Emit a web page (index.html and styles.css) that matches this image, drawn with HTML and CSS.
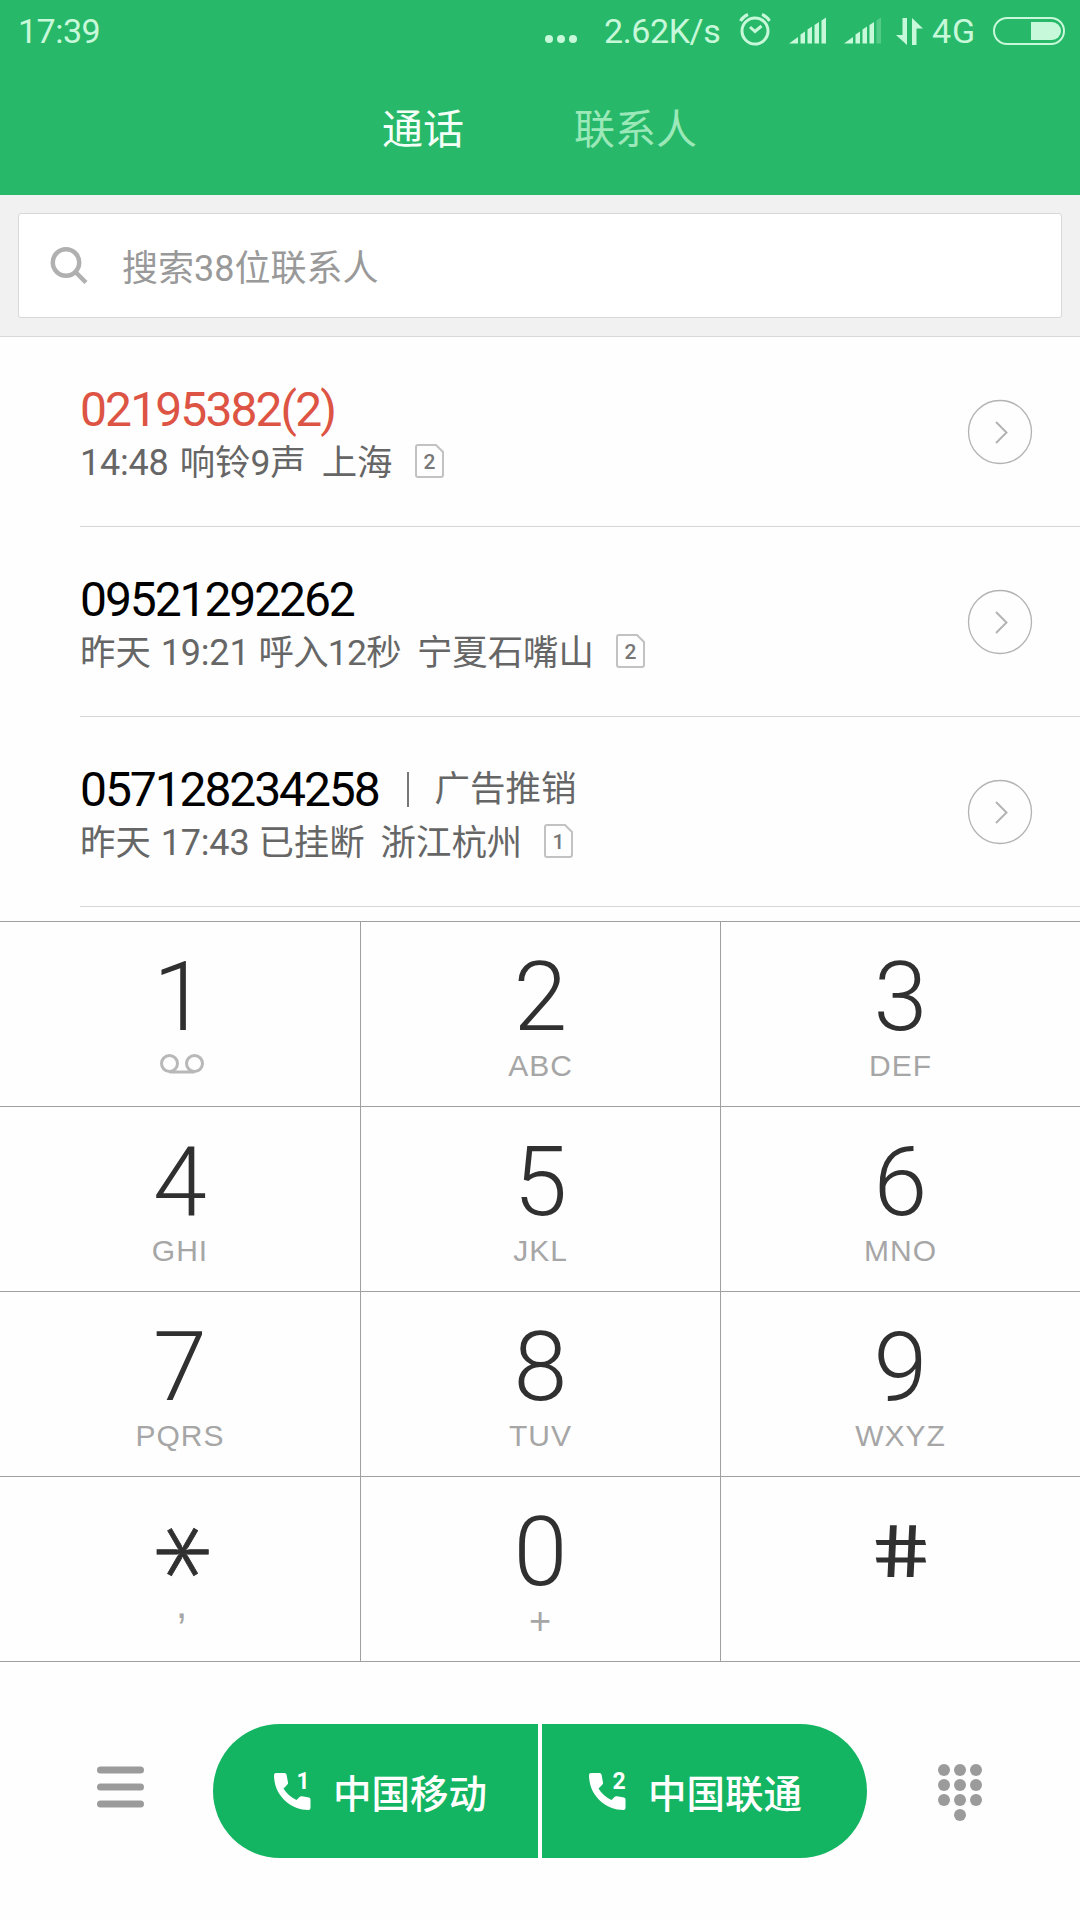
FILE: index.html
```html
<!DOCTYPE html>
<html lang="zh-CN">
<head>
    <meta charset="UTF-8">
    <meta name="viewport" content="width=device-width, initial-scale=1.0">
    <title>通话</title>
    <link rel="stylesheet" href="styles.css">
</head>
<body>
    <header class="header">
        <div class="status-bar">
            <span class="clock">17:39</span>
            <div class="status-icons">
                <svg class="dots" width="32" height="8" viewBox="0 0 32 8">
                    <circle cx="4" cy="4" r="4"/><circle cx="16" cy="4" r="4"/><circle cx="28" cy="4" r="4"/>
                </svg>
                <span class="speed">2.62K/s</span>
                <svg class="alarm" width="32" height="32" viewBox="0 0 32 32">
                    <circle cx="16" cy="18" r="13"/>
                    <path d="M11 14l5 4.5 6.5-5.5M1.500 8Q4 3.500 9 1.500M30.500 8Q28 3.500 23 1.500"/>
                </svg>
                <svg class="signal" width="37" height="26" viewBox="0 0 37 26">
                    <path d="M0 25.500L9 19v6.500zM11.500 16.500l4.500-3v12h-4.500zM18.500 11.500l4.500-3v17h-4.500zM25.500 7l4.500-3v21.500h-4.500zM32.500 2.500l4.500-3v26h-4.500z"/>
                </svg>
                <svg class="signal" width="37" height="26" viewBox="0 0 37 26">
                    <path d="M0 25.500L9 19v6.500zM11.500 16.500l4.500-3v12h-4.500zM18.500 11.500l4.500-3v17h-4.500zM25.500 7l4.500-3v21.500h-4.500z"/>
                    <path class="weak" d="M32.500 2.500l4.500-3v26h-4.500z"/>
                </svg>
                <svg class="updown" width="27" height="27" viewBox="0 0 27 27">
                    <path d="M6.500 0H11v27L0 17h6.500zM16 27h4.500V10.500H27L16 0z"/>
                </svg>
                <span class="network">4G</span>
                <svg class="battery" width="72" height="28" viewBox="0 0 72 28">
                    <rect class="shell" x="1" y="1" width="70" height="26" rx="13"/>
                    <path d="M38 5h21a9 9 0 0 1 0 18H38z"/>
                </svg>
            </div>
        </div>
        <nav class="tabs">
            <span class="tab active">通话</span>
            <span class="tab">联系人</span>
        </nav>
    </header>

    <div class="search">
        <div class="search-box">
            <svg class="search-icon" width="38" height="38" viewBox="0 0 38 38">
                <circle cx="15" cy="15.500" r="13.200"/>
                <path d="M24.500 25L35 35.500"/>
            </svg>
            <span class="search-text">搜索38位联系人</span>
        </div>
    </div>

    <main class="calls">
        <div class="call">
            <div class="call-info">
                <div class="call-top"><span class="number missed">02195382(2)</span></div>
                <div class="call-sub">
                    <span class="time first">14:48</span><span>响铃9声</span><span class="place">上海</span>
                    <svg class="sim" width="29" height="34" viewBox="0 0 29 34"><path d="M3 1h18l7 7v23a2 2 0 0 1-2 2H3a2 2 0 0 1-2-2V3a2 2 0 0 1 2-2z"/><text x="14.500" y="24.500">2</text></svg>
                </div>
            </div>
            <svg class="more" width="66" height="66" viewBox="0 0 66 66"><circle cx="33" cy="33" r="31.500"/><path d="M29 23l10.500 10.500L29 44"/></svg>
        </div>
        <div class="call">
            <div class="call-info">
                <div class="call-top"><span class="number">09521292262</span></div>
                <div class="call-sub">
                    <span>昨天</span><span class="time">19:21</span><span class="tight">呼入12秒</span><span class="place">宁夏石嘴山</span>
                    <svg class="sim" width="29" height="34" viewBox="0 0 29 34"><path d="M3 1h18l7 7v23a2 2 0 0 1-2 2H3a2 2 0 0 1-2-2V3a2 2 0 0 1 2-2z"/><text x="14.500" y="24.500">2</text></svg>
                </div>
            </div>
            <svg class="more" width="66" height="66" viewBox="0 0 66 66"><circle cx="33" cy="33" r="31.500"/><path d="M29 23l10.500 10.500L29 44"/></svg>
        </div>
        <div class="call">
            <div class="call-info">
                <div class="call-top"><span class="number">057128234258</span><span class="tag">广告推销</span></div>
                <div class="call-sub">
                    <span>昨天</span><span class="time">17:43</span><span>已挂断</span><span class="place">浙江杭州</span>
                    <svg class="sim" width="29" height="34" viewBox="0 0 29 34"><path d="M3 1h18l7 7v23a2 2 0 0 1-2 2H3a2 2 0 0 1-2-2V3a2 2 0 0 1 2-2z"/><text x="14.500" y="24.500">1</text></svg>
                </div>
            </div>
            <svg class="more" width="66" height="66" viewBox="0 0 66 66"><circle cx="33" cy="33" r="31.500"/><path d="M29 23l10.500 10.500L29 44"/></svg>
        </div>
    </main>

    <section class="keypad">
        <div class="key"><span class="digit">1</span>
            <svg class="voicemail" width="44" height="20" viewBox="0 0 44 20"><circle cx="9.500" cy="9.500" r="8"/><circle cx="34.500" cy="9.500" r="8"/><path d="M9.500 18h25"/></svg>
        </div>
        <div class="key"><span class="digit">2</span><span class="letters">ABC</span></div>
        <div class="key"><span class="digit">3</span><span class="letters">DEF</span></div>
        <div class="key"><span class="digit">4</span><span class="letters">GHI</span></div>
        <div class="key"><span class="digit">5</span><span class="letters">JKL</span></div>
        <div class="key"><span class="digit">6</span><span class="letters">MNO</span></div>
        <div class="key"><span class="digit">7</span><span class="letters">PQRS</span></div>
        <div class="key"><span class="digit">8</span><span class="letters">TUV</span></div>
        <div class="key"><span class="digit">9</span><span class="letters">WXYZ</span></div>
        <div class="key"><span class="digit star"><i>*</i></span><span class="letters comma">,</span></div>
        <div class="key"><span class="digit">0</span><span class="letters plus">+</span></div>
        <div class="key"><span class="digit hash"><i>#</i></span></div>
    </section>

    <footer class="footer">
        <svg class="menu" width="48" height="42" viewBox="0 0 48 42">
            <path d="M4.500 4h40M4.500 21h40M4.500 38h40"/>
        </svg>
        <div class="dial">
            <div class="dial-btn">
                <svg class="phone" width="37" height="40" viewBox="0 0 37 40">
                    <path d="M2 2h8.500a2 2 0 0 1 2 1.500l1.500 8q.300 1.500-1 2.500l-3.500 3.500Q14 25 22.500 29l3-3q1-1 2.500-.700l7 1.200q1.500.500 1.500 2V37q0 2-2 2C17 39 0 25 0 4q0-2 2-2z"/>
                    <text x="29" y="18">1</text>
                </svg>
                <span>中国移动</span>
            </div>
            <div class="dial-btn">
                <svg class="phone" width="37" height="40" viewBox="0 0 37 40">
                    <path d="M2 2h8.500a2 2 0 0 1 2 1.500l1.500 8q.300 1.500-1 2.500l-3.500 3.500Q14 25 22.500 29l3-3q1-1 2.500-.700l7 1.200q1.500.500 1.500 2V37q0 2-2 2C17 39 0 25 0 4q0-2 2-2z"/>
                    <text x="30" y="18">2</text>
                </svg>
                <span>中国联通</span>
            </div>
        </div>
        <svg class="pad" width="44" height="58" viewBox="0 0 44 58">
            <circle cx="6" cy="6" r="6"/><circle cx="22" cy="6" r="6"/><circle cx="38" cy="6" r="6"/>
            <circle cx="6" cy="21" r="6"/><circle cx="22" cy="21" r="6"/><circle cx="38" cy="21" r="6"/>
            <circle cx="6" cy="36" r="6"/><circle cx="22" cy="36" r="6"/><circle cx="38" cy="36" r="6"/>
            <circle cx="22" cy="51" r="6"/>
        </svg>
    </footer>
</body>
</html>
```
FILE: styles.css
```css
* {
    box-sizing: border-box;
}

body {
    margin: 0;
    width: 1080px;
    height: 1920px;
    overflow: hidden;
    display: flex;
    flex-direction: column;
    background: #fefefe;
    font-family: Roboto, "Noto Sans CJK SC", sans-serif;
    font-weight: 400;
}

svg {
    flex: none;
    display: block;
    overflow: visible;
}

/* header */
.header {
    height: 195px;
    background: #28b869;
    color: #c8f8da;
}

.status-bar {
    height: 62px;
    padding: 0 15px 0 18px;
    display: flex;
    justify-content: space-between;
    align-items: center;
    font-size: 34px;
    line-height: 62px;
}

.clock {
    letter-spacing: -0.5px;
}

.status-icons {
    display: flex;
    align-items: center;
    fill: #c8f8da;
}

.dots {
    margin: 15px 27px 0 0;
}

.speed {
    width: 118px;
    margin-right: 17px;
    letter-spacing: -0.4px;
    white-space: nowrap;
}

.alarm {
    margin: -4px 18px 0 0;
    fill: none;
    stroke: #c8f8da;
    stroke-width: 3;
}

.signal {
    margin-right: 18px;
}

.signal + .updown {
    margin-left: -3px;
}

.weak {
    fill: #53cb87;
}

.network {
    width: 46px;
    margin: 0 15px 0 9px;
    letter-spacing: 1px;
}

.shell {
    fill: none;
    stroke: #c8f8da;
    stroke-width: 2;
}

.tabs {
    display: flex;
    padding-left: 382px;
    gap: 110px;
    font-family: "Noto Sans CJK SC", sans-serif;
    font-size: 41px;
    line-height: 129px;
}

.tab {
    color: #9be8b9;
}

.tab.active {
    color: #f4fff8;
}

/* search */
.search {
    height: 142px;
    padding: 18px 18px 17px;
    background: #f1f1f1;
    border-bottom: 1px solid #d8d8d8;
}

.search-box {
    height: 105px;
    padding: 0 0 0 32px;
    display: flex;
    align-items: center;
    background: #fff;
    border: 1px solid #d8d8d8;
    border-radius: 3px;
}

.search-icon {
    fill: none;
    stroke: #b0b0b0;
    stroke-width: 4.5;
}

.search-text {
    margin: -2px 0 0 33px;
    font-size: 36px;
    color: #999;
}

/* call list */
.calls {
    height: 584px;
    padding-left: 80px;
}

.call {
    height: 190px;
    padding-right: 47px;
    display: flex;
    justify-content: space-between;
    align-items: center;
    border-bottom: 1px solid #d6d6d6;
}

.call-top,
.call-sub {
    display: flex;
    align-items: center;
    white-space: nowrap;
}

.call-top {
    height: 58px;
    margin-top: 1px;
    padding-top: 6px;
}

.number {
    font-size: 48px;
    letter-spacing: -2.1px;
    color: #000;
}

.missed {
    letter-spacing: -1.9px;
    color: #dd5444;
}

.tag {
    margin-left: 28px;
    padding-left: 26px;
    font-size: 35.500px;
    line-height: 35px;
    border-left: 2px solid #777;
    color: #666;
}

.call-sub {
    height: 52px;
    font-size: 35.400px;
    line-height: 48px;
    color: #666;
}

.call-sub span {
    margin-top: 4px;
}

.call-sub .time {
    margin: 3px 9px 0 10px;
    font-size: 36px;
    letter-spacing: -0.2px;
}

.call-sub .first {
    margin: 3px 11px 0 0;
}

.tight {
    letter-spacing: -0.7px;
}

.place {
    margin-left: 16px;
}

.sim {
    margin-left: 22px;
    fill: none;
    stroke: #c2c2c2;
    stroke-width: 2;
}

.sim text {
    font-size: 21px;
    font-weight: 500;
    text-anchor: middle;
    fill: #777;
    stroke: none;
}

.more {
    fill: none;
    stroke: #b3b3b3;
    stroke-width: 1.3;
}

.more path {
    stroke-width: 2;
}

/* keypad */
.keypad {
    display: grid;
    grid-template-columns: 361px 360px 359px;
    grid-auto-rows: 185px;
    border-top: 1px solid #a0a0a0;
}

.key {
    display: flex;
    flex-direction: column;
    align-items: center;
    border-right: 1px solid #a0a0a0;
    border-bottom: 1px solid #a0a0a0;
}

.key:nth-child(3n) {
    border-right: none;
}

.digit {
    height: 121px;
    padding-top: 21px;
    font-size: 97px;
    font-weight: 300;
    line-height: 108px;
    color: #303030;
}

.digit i {
    display: block;
    font-style: normal;
}

.letters {
    margin-top: 5px;
    font-family: "Liberation Sans", sans-serif;
    font-size: 30px;
    line-height: 36px;
    letter-spacing: 1px;
    color: #a6a6a6;
}

.voicemail {
    margin: 11px 0 0 3px;
    fill: none;
    stroke: #b8b8b8;
    stroke-width: 3;
}

/* Lato's star points up, the keypad one lies on its side */
.star i {
    font-family: Lato, sans-serif;
    font-size: 172px;
    transform: translateX(-34px) rotate(90deg);
    -webkit-text-stroke: 0.8px #303030;
}

.hash i {
    font-weight: 400;
    transform: translateX(-2px) scale(1, 0.75) skewX(9deg);
}

.comma {
    margin: 0 0 0 4px;
    font-size: 42px;
    line-height: 12px;
}

.plus {
    font-size: 38px;
}

/* footer */
.footer {
    height: 258px;
    padding: 0 98px 0 96px;
    display: flex;
    align-items: center;
    justify-content: space-between;
}

.menu {
    margin-top: -9px;
    fill: none;
    stroke: #9b9b9b;
    stroke-width: 7;
    stroke-linecap: round;
}

.dial {
    display: flex;
    gap: 4px;
    margin-left: -2px;
}

.dial-btn {
    width: 325px;
    height: 134px;
    padding-left: 61px;
    display: flex;
    align-items: center;
    gap: 22px;
    border-radius: 67px 0 0 67px;
    background: #14b562;
    color: #fff;
    font-family: "Noto Sans CJK SC", sans-serif;
    font-size: 38.500px;
    font-weight: 500;
    line-height: 50px;
}

.dial-btn + .dial-btn {
    padding-left: 47px;
    border-radius: 0 67px 67px 0;
}

.phone {
    fill: #fff;
}

.phone text {
    font-family: Roboto, sans-serif;
    font-size: 23px;
    font-weight: 700;
    text-anchor: middle;
}

.pad {
    margin-top: 3px;
    fill: #9b9b9b;
}
```
